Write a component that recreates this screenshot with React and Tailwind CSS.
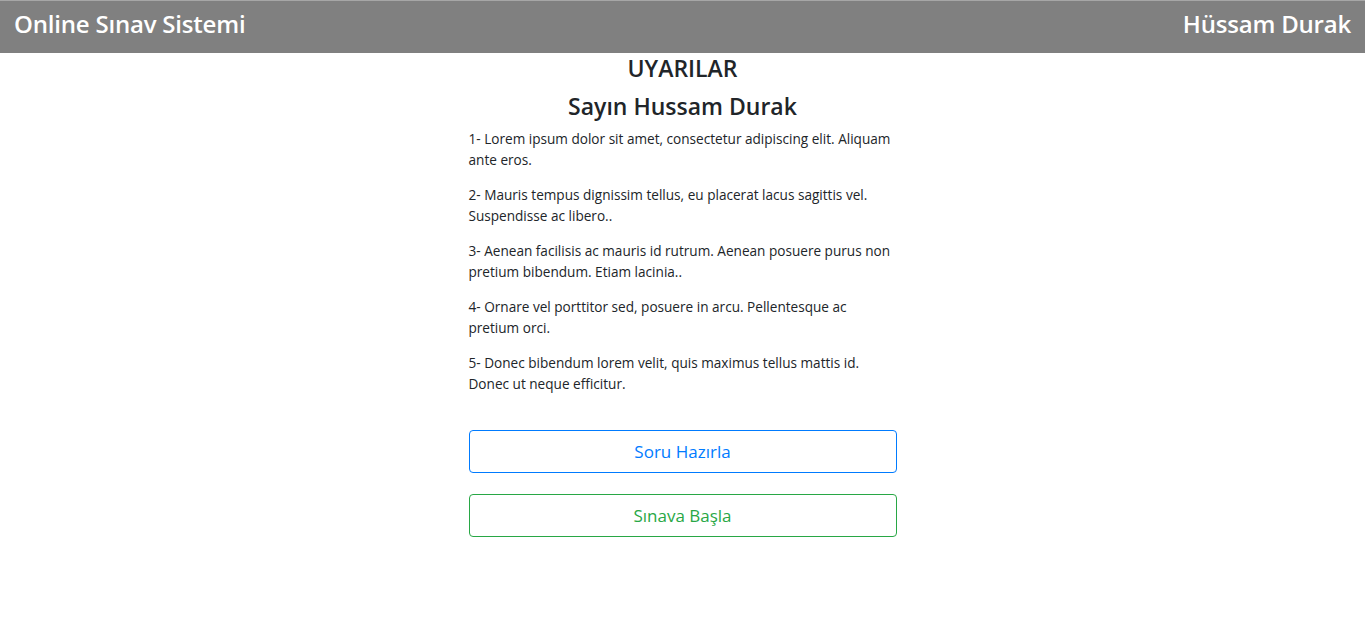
const RULES = [
  '1- Lorem ipsum dolor sit amet, consectetur adipiscing elit. Aliquam ante eros.',
  '2- Mauris tempus dignissim tellus, eu placerat lacus sagittis vel. Suspendisse ac libero..',
  '3- Aenean facilisis ac mauris id rutrum. Aenean posuere purus non pretium bibendum. Etiam lacinia..',
  '4- Ornare vel porttitor sed, posuere in arcu. Pellentesque ac pretium orci.',
  '5- Donec bibendum lorem velit, quis maximus tellus mattis id. Donec ut neque efficitur.',
]

export default function App() {
  return (
    <div className="min-h-screen bg-white font-['Open_Sans',sans-serif] text-[#212529]">
      <header className="flex h-[53px] items-center justify-between border-t border-[#a6a6a6] bg-[#808080] px-[14px] pb-[6px] text-white">
        <span className="text-[24px] font-semibold tracking-[-0.2px]">Online Sınav Sistemi</span>
        <span className="text-[24px] font-semibold tracking-[-0.2px]">Hüssam Durak</span>
      </header>

      <main className="mx-auto w-[428px]">
        <h2 className="text-center text-[23px] font-semibold leading-[30px]">UYARILAR</h2>
        <h3 className="mt-[8px] text-center text-[23px] font-semibold leading-[30px]">Sayın Hussam Durak</h3>

        <div className="mt-[7px] pr-[2px]">
          {RULES.map((r) => (
            <p key={r} className="mb-[14px] text-[13.6px] leading-[21px]">
              {r}
            </p>
          ))}
        </div>

        <div className="mt-[36px] flex flex-col gap-[21px]">
          <button className="h-[43px] w-full rounded-[4px] border border-[#007bff] text-[17px] text-[#007bff]">
            Soru Hazırla
          </button>
          <button className="h-[43px] w-full rounded-[4px] border border-[#28a745] text-[17px] text-[#28a745]">
            Sınava Başla
          </button>
        </div>
      </main>
    </div>
  )
}
